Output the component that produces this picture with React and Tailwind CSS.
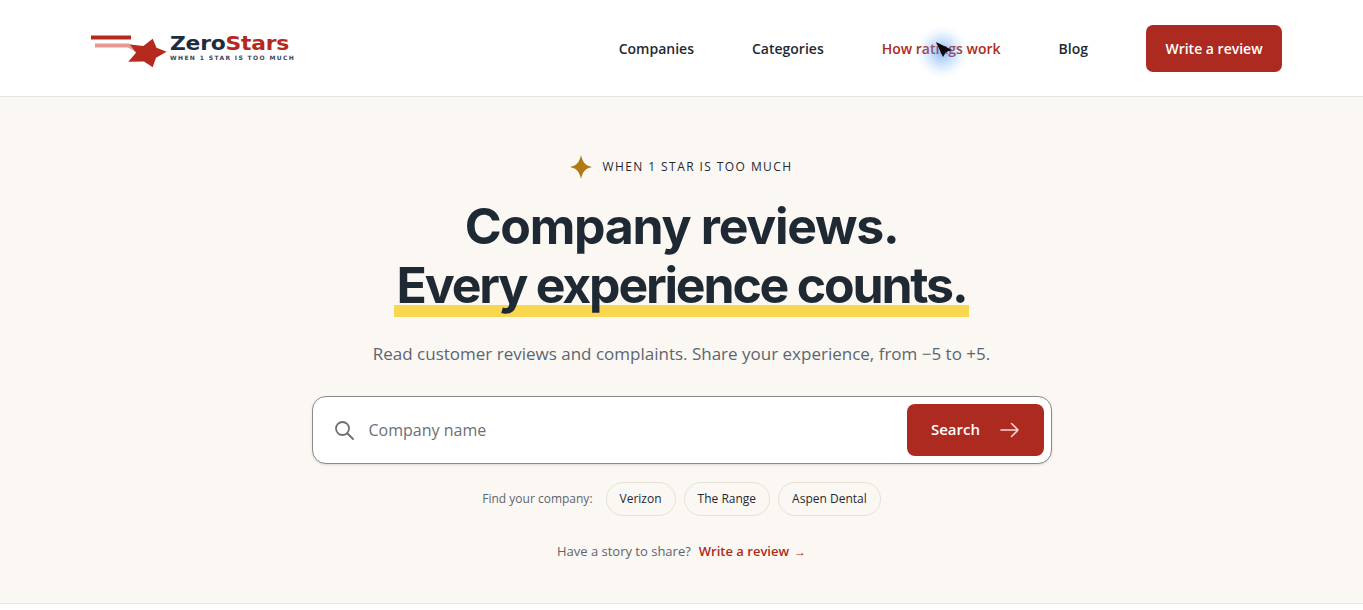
import React from 'react'

function Logo() {
  return (
    <div className="flex items-center w-[215px] h-[40px] pl-[10px]">
      <svg width="78" height="40" viewBox="0 -1.5 78 40" className="shrink-0">
        <rect x="0" y="6" width="40" height="4" fill="#b5291f" />
        <path d="M4 14 H38 L50 20 L46 23 L37 18 H4 Z" fill="#e39a92" />
        <path d="M61.7 9.3 L65.5 18.3 L75.7 22.3 L65 28.3 L61.7 37.7 L53 32 L37.3 32.3 L45 23.3 L39 15 L52.3 16.5 Z" fill="#b5291f" />
      </svg>
      <div className="flex flex-col ml-[1px] font-['DejaVu_Sans',sans-serif] font-bold">
        <div className="text-[19.5px] leading-[18px] tracking-[-0.2px] text-[#1f2c3d] scale-x-[1.12] origin-left">Zero<span className="text-[#b5291f]">Stars</span></div>
        <div className="text-[6px] leading-[8px] mt-[1px] tracking-[1.37px] text-[#3a4656] whitespace-nowrap">WHEN 1 STAR IS TOO MUCH</div>
      </div>
    </div>
  )
}

function Chip({ children }) {
  return (
    <span className="h-[34px] px-[13px] flex items-center rounded-full border border-[#e5e0d8] text-[12px] text-[#1f2933]">{children}</span>
  )
}

export default function App() {
  return (
    <div className="relative min-h-[610px] bg-white font-['Open_Sans',sans-serif] overflow-hidden">
      <header className="h-[97px] border-b border-[#e5e5e5] flex items-center justify-between pl-[81px] pr-[81px]">
        <Logo />
        <nav className="flex items-center text-[14px] font-semibold text-[#1f2933]">
          <a className="mr-[58px]">Companies</a>
          <a className="mr-[58px]">Categories</a>
          <a className="mr-[58px] text-[#ad2a20]">How ratings work</a>
          <a className="mr-[58px]">Blog</a>
          <a className="w-[136px] h-[47px] rounded-[7px] bg-[#ad2a20] text-white flex items-center justify-center">Write a review</a>
        </nav>
      </header>

      <main className="h-[507px] bg-[#fbf8f3] border-b border-[#e5e5e5] flex flex-col items-center pt-[58px]">
        <div className="flex items-center h-[24px]">
          <svg width="22" height="24" viewBox="0 0 22 24" className="mr-[10px]">
            <path d="M11 0 C12.5 7 15 10.5 22 12 C15 13.5 12.5 17 11 24 C9.5 17 7 13.5 0 12 C7 10.5 9.5 7 11 0 Z" fill="#b07a10" />
          </svg>
          <span className="text-[12px] font-medium tracking-[1.42px] text-[#1f2933]">WHEN 1 STAR IS TOO MUCH</span>
        </div>

        <h1 className="mt-[18px] text-center font-['Inter',sans-serif] font-bold text-[50px] leading-[59px] text-[#1f2933]">
          <div className="tracking-[-1.3px]">Company reviews.</div>
          <div className="relative w-[575px] isolate tracking-[-2.2px]">
            <span className="absolute left-0 right-0 top-[49px] h-[12px] bg-[#f9d84f] -z-10"></span>
            Every experience counts.
          </div>
        </h1>

        <p className="mt-[26px] text-[17px] leading-[26px] text-[#5b6570]">Read customer reviews and complaints. Share your experience, from −5 to +5.</p>

        <div className="mt-[29px] w-[740px] h-[68px] rounded-[14px] border border-[#8a8a8a] bg-white flex items-center pl-[22px] pr-[7px] shadow-sm">
          <svg width="19" height="19" viewBox="0 0 19 19" fill="none" stroke="#6b7075" strokeWidth="1.8" strokeLinecap="round">
            <circle cx="7.5" cy="7.5" r="6.5" />
            <path d="M12.5 12.5 L18 18" />
          </svg>
          <span className="ml-[15px] text-[16px] text-[#6b7075] flex-1">Company name</span>
          <button className="w-[137px] h-[52px] rounded-[8px] bg-[#ad2a20] text-white text-[15px] font-semibold flex items-center justify-center gap-[20px]">
            <span className="-translate-y-px">Search</span>
            <svg width="19" height="16" viewBox="0 0 19 16" fill="none" stroke="#f6d6d0" strokeWidth="1.6" strokeLinecap="round" strokeLinejoin="round">
              <path d="M1 8 H18 M11.5 1.5 L18 8 L11.5 14.5" />
            </svg>
          </button>
        </div>

        <div className="mt-[18px] flex items-center gap-[8px]">
          <span className="text-[12px] text-[#5b6570] mr-[5px]">Find your company:</span>
          <Chip>Verizon</Chip>
          <Chip>The Range</Chip>
          <Chip>Aspen Dental</Chip>
        </div>

        <div className="mt-[25px] text-[13px] leading-[20px] text-[#5b6570]">
          Have a story to share?
          <a className="ml-[8px] font-semibold text-[#ad2a20]">Write a review</a>
          <span className="ml-[5px] text-[#ad2a20] text-[12px]">→</span>
        </div>
      </main>

      <div className="absolute left-[915px] top-[25px] w-[54px] h-[54px] rounded-full bg-[radial-gradient(circle,rgba(59,130,246,0.55)_0%,rgba(96,165,250,0.32)_30%,rgba(147,197,253,0.1)_55%,rgba(255,255,255,0)_70%)]"></div>
      <svg width="18" height="18" viewBox="0 0 18 18" className="absolute left-[935px] top-[41px]">
        <path d="M1 1 L17 9 L11 11 L8 16 Z" fill="#0b0b0b" />
      </svg>
    </div>
  )
}
